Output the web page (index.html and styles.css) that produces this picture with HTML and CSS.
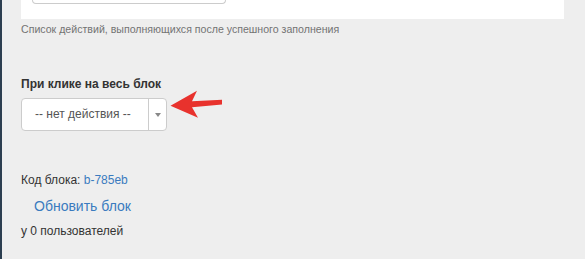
FILE: index.html
```html
<!DOCTYPE html>
<html lang="ru">
<head>
    <meta charset="UTF-8">
    <title>Настройки блока</title>
    <link rel="stylesheet" href="styles.css">
</head>
<body>
    <div class="page">
        <div class="panel">
            <div class="input-stub"></div>
        </div>
        <p class="hint">Список действий, выполняющихся после успешного заполнения</p>

        <div class="field">
            <label class="field-label">При клике на весь блок</label>
            <div class="select-row">
                <div class="select">
                    <span class="select-value">-- нет действия --</span>
                    <span class="select-caret"></span>
                </div>
                <svg class="pointer" width="56" height="32" viewBox="0 0 56 32">
                    <path d="M2.5 17.7 L29 2.7 L24 13.3 L54 11.8 L54 16.5 L24 19.2 L30 29.7 Z" fill="#e8322d"/>
                </svg>
            </div>
        </div>

        <div class="block-info">
            <p class="block-code">Код блока: <a href="#">b-785eb</a></p>
            <a class="refresh" href="#">Обновить блок</a>
            <p class="users">у 0 пользователей</p>
        </div>
    </div>
</body>
</html>
```

FILE: styles.css
```css
body {
    margin: 0;
    font-family: 'Liberation Sans', Arial, sans-serif;
    background-color: #eeeeee;
    color: #333;
}

.page {
    border-left: 2px solid #2c3e50;
    min-height: 259px;
    padding-left: 19px;
    box-sizing: border-box;
}

.panel {
    background-color: #fff;
    height: 19px;
    margin-right: 21px;
    padding: 0 11px;
}

.input-stub {
    width: 192px;
    height: 3px;
    border: 1px solid #ccc;
    border-top: none;
    border-radius: 0 0 4px 4px;
}

.hint {
    margin: 3px 0 0;
    font-size: 10.6px;
    line-height: 14px;
    color: #737373;
}

.field {
    margin-top: 40px;
}

.field-label {
    display: block;
    font-size: 12px;
    font-weight: bold;
    line-height: 16px;
    margin-bottom: 6px;
}

.select-row {
    display: flex;
    align-items: flex-start;
}

.select {
    display: flex;
    width: 146px;
    height: 33px;
    box-sizing: border-box;
    border: 1px solid #ccc;
    border-radius: 4px;
    background-color: #fff;
}

.select-value {
    flex: 1;
    padding-left: 13px;
    font-size: 12px;
    line-height: 31px;
    color: #555;
}

.select-caret {
    width: 17px;
    border-left: 1px solid #ccc;
    position: relative;
}

.select-caret::after {
    content: '';
    position: absolute;
    left: 6px;
    top: 14px;
    border-left: 3px solid transparent;
    border-right: 3px solid transparent;
    border-top: 4px solid #888;
}

.pointer {
    margin-left: 1px;
    margin-top: -10px;
}

.block-info {
    margin-top: 41px;
}

.block-code {
    margin: 0;
    font-size: 12px;
    line-height: 16px;
}

.block-code a {
    color: #3a7bbf;
    text-decoration: none;
}

.refresh {
    display: inline-block;
    margin: 9px 0 0 13px;
    font-size: 14px;
    line-height: 18px;
    color: #3a7bbf;
    text-decoration: none;
}

.users {
    margin: 8px 0 0;
    font-size: 12px;
    line-height: 16px;
}
```
